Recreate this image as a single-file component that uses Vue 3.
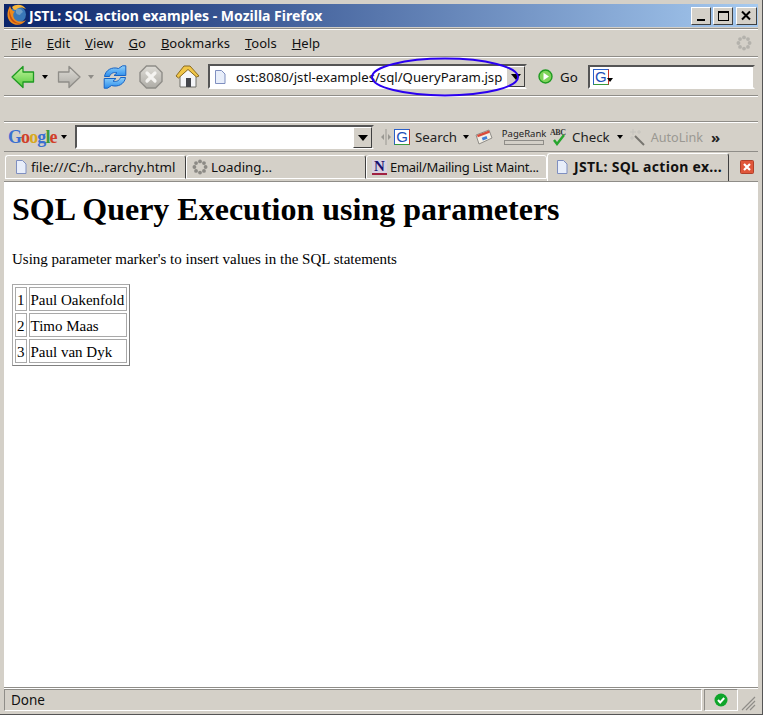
<template>
  <div class="window">
    <div class="titlebar">
      <svg class="fx" width="22" height="22" viewBox="0 0 22 22">
        <circle cx="12" cy="10.500" r="8" fill="#3a78b8" />
        <path d="M10 5c3-1 6 0 7 3-1 1-2 1-3 3-2 0-3-1-4-2z" fill="#6f9ec8" />
        <path d="M4 2 C1 7 0 14 5 18.500 C10 22.500 17 21 20 16 C16 18.500 11 18 8.500 15 C6.500 12 7 9 9 7.500 C7 7.500 5.500 6 4 2 Z" fill="#ee8a1c" />
        <path d="M6 3 C10 -0.500 17 0 20 5 C16 2.500 12 3 9.500 6 C8 6 7 5 6 3 Z" fill="#f6b73c" />
        <path d="M3.500 6 C2.500 10 3.500 15 7 18 C10 20 14 20 16 19 C11 20 5 17 3.500 6 Z" fill="#c9500f" />
      </svg>
      <span class="title-text">JSTL: SQL action examples - Mozilla Firefox</span>
      <div class="win-btns">
        <button class="win-btn"><svg width="15" height="14"><rect x="3" y="10" width="8" height="2" fill="#000" /></svg></button>
        <button class="win-btn"><svg width="15" height="14"><rect x="2.500" y="2.500" width="10" height="9" fill="none" stroke="#000" /><rect x="2" y="2" width="11" height="2" fill="#000" /></svg></button>
        <button class="win-btn close"><svg width="15" height="14"><path d="M3 2.500l8 8M11 2.500l-8 8" stroke="#000" stroke-width="2" /></svg></button>
      </div>
    </div>

    <div class="menubar">
      <span v-for="m in menus" :key="m.rest" class="menu"><u>{{ m.key }}</u>{{ m.rest }}</span>
      <svg class="throbber" width="16" height="16" viewBox="0 0 16 16">
        <g fill="#b4b2ac">
          <circle v-for="d in dots" :key="d.x + '-' + d.y" :cx="d.x" :cy="d.y" r="1.900" />
        </g>
      </svg>
    </div>

    <div class="navbar">
      <svg class="back" width="24" height="24" viewBox="0 0 24 24">
        <defs>
          <linearGradient id="gr" x1="0" y1="0" x2="0" y2="1">
            <stop offset="0" stop-color="#c6f5a0" />
            <stop offset="1" stop-color="#52c93a" />
          </linearGradient>
          <linearGradient id="bl" x1="0" y1="0" x2="0" y2="1">
            <stop offset="0" stop-color="#8fd0fa" />
            <stop offset="1" stop-color="#2a8cec" />
          </linearGradient>
          <linearGradient id="gy" x1="0" y1="0" x2="0" y2="1">
            <stop offset="0" stop-color="#dedcd6" />
            <stop offset="1" stop-color="#aeaca6" />
          </linearGradient>
        </defs>
        <path d="M1 12 L12 1.500 V7 H22.500 V17 H12 V22.500 Z" fill="url(#gr)" stroke="#1f9a22" stroke-width="1.300" stroke-linejoin="round" />
      </svg>
      <span class="arrow dark"></span>
      <svg class="forward" width="24" height="24" viewBox="0 0 24 24">
        <path d="M23 12 L12 1.500 V7 H1.500 V17 H12 V22.500 Z" fill="url(#gy)" stroke="#8f8d88" stroke-width="1.300" stroke-linejoin="round" />
      </svg>
      <span class="arrow grey"></span>
      <svg class="reload" width="24" height="24" viewBox="0 0 24 24">
        <path d="M1.500 11.500 C2.500 5 9 1.500 15.500 3.500 L19.500 .8 L22.800 .8 V10.500 H11 L14 7.800 C10.500 6.800 7.500 8.500 6.500 11.500 Z" fill="url(#bl)" stroke="#1763c4" />
        <path d="M22.500 12.500 C21.500 19 15 22.500 8.500 20.500 L4.500 23.200 L1.200 23.200 V13.500 H13 L10 16.200 C13.500 17.200 16.500 15.500 17.500 12.500 Z" fill="url(#bl)" stroke="#1763c4" />
      </svg>
      <svg class="stop" width="24" height="24" viewBox="0 0 24 24">
        <path d="M7.500 1h9l6.500 6.500v9L16.500 23h-9L1 16.500v-9z" fill="url(#gy)" stroke="#8f8d88" stroke-width="1.400" />
        <path d="M8 8l8 8M16 8l-8 8" stroke="#f4f3f0" stroke-width="3.200" stroke-linecap="round" />
      </svg>
      <svg class="home" width="25" height="25" viewBox="0 0 25 25">
        <path d="M5 12 L13 5 L21 12 V23 H5 Z" fill="#f4f5f8" stroke="#70706a" />
        <path d="M1 12 L9 2 H15 L24 12 L21.500 13 L13 5.500 L3.500 14 Z" fill="#f0c648" stroke="#8a6a20" stroke-linejoin="round" />
        <rect x="11" y="14" width="5" height="9" fill="#44464c" />
      </svg>
      <div class="urlbox">
        <svg class="page" width="14" height="16" viewBox="0 0 14 16">
          <path d="M2.500 1.500h6l3.500 3.500v9.500h-9.500z" fill="#e8eefa" stroke="#7f8fc0" />
        </svg>
        <span class="url">ost:8080/jstl-examples/sql/QueryParam.jsp</span>
        <span class="combo-btn"><i></i></span>
      </div>
      <svg class="go-icon" width="15" height="15" viewBox="0 0 15 15">
        <circle cx="7.500" cy="7.500" r="6.500" fill="#7fd45a" stroke="#1f9a22" stroke-width="1.400" />
        <path d="M5.500 3.800l5.500 3.700-5.500 3.700z" fill="#fff" />
      </svg>
      <span class="go">Go</span>
      <div class="searchbox">
        <span class="g-icon small">G</span><i class="g-caret"></i>
      </div>
    </div>

    <div class="emptybar"></div>

    <div class="googlebar">
      <span class="google"><b class="c-b">G</b><b class="c-r">o</b><b class="c-y">o</b><b class="c-b">g</b><b class="c-g">l</b><b class="c-r">e</b></span>
      <span class="arrow dark small"></span>
      <div class="gbox"><span class="combo-btn"><i></i></span></div>
      <svg class="grip" width="10" height="16" viewBox="0 0 10 16">
        <path d="M5 0v16" stroke="#9a9892" />
        <path d="M3 5v6L0 8zM7 5v6l3-3z" fill="#9a9892" />
      </svg>
      <span class="g-icon">G</span>
      <span class="tb-label search">Search</span>
      <span class="arrow dark small s2"></span>
      <svg class="cards" width="18" height="16" viewBox="0 0 18 16">
        <path d="M1 6l13-5 3 8-13 6z" fill="#f2efe6" stroke="#8f8d88" />
        <path d="M2 6l12-4.500 .8 2.200-12 4.500z" fill="#d94a3a" />
        <rect x="7" y="8" width="5" height="3" fill="#3f7fd8" transform="rotate(-20 9 9)" />
      </svg>
      <div class="pagerank"><span>PageRank</span><i></i></div>
      <svg class="abc" width="16" height="20" viewBox="0 0 16 20">
        <text x="0" y="8" font-size="8" font-family="Liberation Serif, serif" font-weight="700" fill="#333" textLength="16">ABC</text>
        <path d="M4 13l3 4 7-9" fill="none" stroke="#27a52d" stroke-width="2.400" />
      </svg>
      <span class="tb-label check">Check</span>
      <span class="arrow dark small s3"></span>
      <svg class="wand" width="16" height="17" viewBox="0 0 16 17">
        <path d="M6 7l9 9" stroke="#77756f" stroke-width="2" />
        <path d="M4 0v6M1 3h6M10 1v4M8 3h4M1 9h4M3 7v4" stroke="#c4c2bc" />
      </svg>
      <span class="tb-label autolink">AutoLink</span>
      <span class="more">»</span>
    </div>

    <div class="tabbar">
      <div class="tab t1">
        <svg width="14" height="16" viewBox="0 0 14 16"><path d="M2.500 1.500h6l3.500 3.500v9.500h-9.500z" fill="#e8eefa" stroke="#7f8fc0" /></svg>
        <span>file:///C:/h...rarchy.html</span>
      </div>
      <div class="tab t2">
        <svg width="16" height="16" viewBox="0 0 16 16"><g fill="#8c8a85"><circle v-for="d in dots" :key="d.x + '_' + d.y" :cx="d.x" :cy="d.y" r="1.900" /></g></svg>
        <span>Loading...</span>
      </div>
      <div class="tab t3">
        <span class="n-icon">N</span>
        <span class="t3-text">Email/Mailing List Maint...</span>
      </div>
      <div class="tab t4">
        <svg width="14" height="16" viewBox="0 0 14 16"><path d="M2.500 1.500h6l3.500 3.500v9.500h-9.500z" fill="#e8eefa" stroke="#7f8fc0" /></svg>
        <strong>JSTL: SQL action ex...</strong>
      </div>
      <div class="tab-close">
        <svg width="14" height="14" viewBox="0 0 14 14">
          <rect x=".5" y=".5" width="13" height="13" rx="1" fill="#e0563a" stroke="#b0402a" />
          <path d="M4 4l6 6M10 4l-6 6" stroke="#fff" stroke-width="2.200" />
        </svg>
      </div>
    </div>

    <div class="content">
      <h1>SQL Query Execution using parameters</h1>
      <p>Using parameter marker's to insert values in the SQL statements</p>
      <table>
        <tbody>
          <tr v-for="(name, i) in artists" :key="name">
            <td>{{ i + 1 }}</td>
            <td class="name">{{ name }}</td>
          </tr>
        </tbody>
      </table>
    </div>

    <div class="statusbar">
      <div class="st-main">Done</div>
      <div class="st-icon">
        <svg width="14" height="14" viewBox="0 0 14 14">
          <circle cx="7" cy="7" r="6.500" fill="#0ea52a" />
          <path d="M4 7l2.200 2.400 4-4.400" fill="none" stroke="#fff" stroke-width="2" />
        </svg>
      </div>
      <svg class="resize" width="16" height="16" viewBox="0 0 16 16">
        <path d="M15 2L2 15M15 6L6 15M15 10L10 15" stroke="#8f8d88" stroke-width="1.200" />
      </svg>
    </div>

    <svg class="annot" width="152" height="42" viewBox="0 0 152 42">
      <ellipse cx="76" cy="21" rx="73" ry="18.500" fill="none" stroke="#2a00f0" stroke-width="2" />
    </svg>
  </div>
</template>

<script setup>
const menus = [
  { key: 'F', rest: 'ile' },
  { key: 'E', rest: 'dit' },
  { key: 'V', rest: 'iew' },
  { key: 'G', rest: 'o' },
  { key: 'B', rest: 'ookmarks' },
  { key: 'T', rest: 'ools' },
  { key: 'H', rest: 'elp' }
]

const artists = ['Paul Oakenfold', 'Timo Maas', 'Paul van Dyk']

// spinner dots, 8 round the circle
const dots = [...Array(8).keys()].map(i => ({
  x: +(8 + 5.6 * Math.cos(i * Math.PI / 4)).toFixed(2),
  y: +(8 + 5.6 * Math.sin(i * Math.PI / 4)).toFixed(2)
}))
</script>

<style>
html, body { margin: 0; background: #d4d0c8; }
</style>

<style scoped>
.window { position: relative; box-sizing: border-box; width: 763px; height: 715px; padding: 4px 4px 3px 4px; background: #d4d0c8; display: flex; flex-direction: column; font-family: "Noto Sans", "Open Sans", sans-serif; font-size: 13.300px; color: #111; border: solid #555; border-width: 0 1px 1px 0; overflow: hidden; }

.titlebar { height: 23px; flex: none; display: flex; align-items: center; background: linear-gradient(to right, #0a246a, #a6caf0); color: #fff; padding-right: 1px; }
.fx { margin-left: 2px; margin-top: -2px; flex: none; }
.title-text { margin-left: 1px; font: 700 14px "Noto Sans", sans-serif; white-space: nowrap; }
.win-btns { margin-left: auto; display: flex; }
.win-btn { box-sizing: border-box; width: 20px; height: 18px; padding: 0; margin-left: 2px; background: #d4d0c8; border: 1px solid; border-color: #fff #404040 #404040 #fff; display: flex; align-items: center; justify-content: center; }
.win-btn.close { margin-left: 3px; width: 21px; }

.menubar { height: 28px; flex: none; margin-top: 2px; box-sizing: border-box; border-top: 1px solid #fff; border-bottom: 1px solid #8f8d88; box-shadow: 0 -1px 0 #8f8d88; display: flex; align-items: center; padding-left: 7px; }
.menu { margin-right: 15px; white-space: nowrap; font-size: 13px; }
.throbber { margin-left: auto; margin-right: 6px; }

.navbar { height: 39px; flex: none; box-sizing: border-box; border-top: 1px solid #fff; border-bottom: 1px solid #8f8d88; display: flex; align-items: center; padding-left: 6px; }
.arrow { display: inline-block; width: 0; height: 0; border: 3.500px solid transparent; border-bottom: 0; border-top: 4px solid #000; flex: none; }
.arrow.grey { border-top-color: #8f8d88; margin-left: 7px; }
.back { flex: none; margin-left: 1px; }
.arrow.dark { margin-left: 7px; }
.forward { margin-left: 9px; flex: none; }
.reload { margin-left: 9px; flex: none; }
.stop { margin-left: 12px; flex: none; }
.home { margin-left: 12px; flex: none; }
.urlbox { margin-left: 8px; box-sizing: border-box; width: 319px; height: 25px; background: #fff; border: 2px solid; border-color: #555 #d4d0c8 #fff #555; display: flex; align-items: center; flex: none; }
.page { margin-left: 3px; flex: none; }
.url { margin-left: 9px; white-space: nowrap; font-size: 13.200px; flex: 1; }
.combo-btn { box-sizing: border-box; width: 19px; height: 21px; background: #d4d0c8; border: 1px solid; border-color: #fff #404040 #404040 #fff; display: flex; align-items: center; justify-content: center; flex: none; }
.combo-btn i { display: block; width: 0; height: 0; border: 5px solid transparent; border-bottom: 0; border-top: 6px solid #000; }
.go-icon { margin-left: 11px; flex: none; }
.go { margin-left: 7px; }
.searchbox { margin-left: 10px; box-sizing: border-box; width: 167px; height: 24px; background: #fff; border: 2px solid; border-color: #555 #d4d0c8 #fff #555; display: flex; align-items: center; padding-left: 3px; }
.g-icon { box-sizing: border-box; width: 16px; height: 16px; flex: none; background: #fff; border: 1px solid #3a9a3a; border-top-color: #2a5fc8; border-left-color: #2a5fc8; border-right-color: #c8352a; font: 15px/14px "Liberation Sans", sans-serif; color: #1c4fb8; text-align: center; }
.g-caret { display: block; width: 0; height: 0; border: 3.500px solid transparent; border-bottom: 0; border-top: 4px solid #000; margin-top: 7px; margin-left: -2px; }

.emptybar { height: 26px; flex: none; box-sizing: border-box; border-top: 1px solid #fff; border-bottom: 1px solid #8f8d88; }

.googlebar { height: 30px; flex: none; box-sizing: border-box; border-top: 1px solid #fff; border-bottom: 1px solid #8f8d88; display: flex; align-items: center; padding-left: 4px; color: #222; }
.google { font: 700 18px "Liberation Serif", serif; letter-spacing: -0.9px; width: 50px; flex: none; }
.c-b { color: #3a6fd0; }
.c-r { color: #d0402a; }
.c-y { color: #d8a820; }
.c-g { color: #3a9a3a; }
.arrow.small { margin-left: 3px; }
.gbox { margin-left: 8px; box-sizing: border-box; width: 299px; height: 24px; background: #fff; border: 2px solid; border-color: #555 #d4d0c8 #fff #555; display: flex; justify-content: flex-end; flex: none; }
.grip { margin-left: 7px; flex: none; }
.googlebar .g-icon { margin-left: 3px; }
.tb-label { white-space: nowrap; }
.search { margin-left: 5px; }
.arrow.s2 { margin-left: 6px; }
.cards { margin-left: 6px; flex: none; }
.pagerank { margin-left: 9px; width: 44px; flex: none; display: flex; flex-direction: column; align-items: center; font-size: 9.500px; line-height: 10px; }
.pagerank span { white-space: nowrap; }
.pagerank i { display: block; box-sizing: border-box; width: 40px; height: 5px; margin-top: 1px; border: 1px solid #8f8d88; }
.abc { margin-left: 4px; flex: none; }
.check { margin-left: 6px; }
.arrow.s3 { margin-left: 7px; }
.wand { margin-left: 6px; flex: none; }
.autolink { margin-left: 6px; color: #9a9892; font-size: 12.600px; }
.more { margin-left: 8px; font-weight: 700; font-size: 15px; line-height: 14px; }

.tabbar { height: 30px; flex: none; box-sizing: border-box; display: flex; align-items: flex-end; padding: 0 0 2px 1px; border-bottom: 1px solid #8f8d88; }
.tab { box-sizing: border-box; height: 24px; display: flex; align-items: center; border: 1px solid; border-color: #fff #404040 #fff #fff; border-radius: 3px 3px 0 0; white-space: nowrap; flex: none; }
.tab span, .tab strong { margin-left: 3px; }
.t1 { width: 181px; padding-left: 8px; }
.t2 { width: 180px; padding-left: 5px; }
.t3 { width: 181px; padding-left: 5px; border-right-color: #fff; }
.t3-text { font-size: 13px; letter-spacing: -0.3px; }
.t4 { width: 182px; height: 28px; padding: 0 0 2px 7px; margin-bottom: -2px; border-bottom: 0; }
.t4 strong { font: 700 14px "Noto Sans", sans-serif; letter-spacing: 0.3px; margin-left: 5px; }
.n-icon { box-sizing: border-box; width: 15px; height: 15px; margin: 0 !important; background: #d8d0e0; border-bottom: 2px solid #a02040; font: 700 15px/13px "Liberation Serif", serif; color: #1a1070; text-align: center; flex: none; }
.tab-close { margin-left: 11px; align-self: center; margin-top: 3px; display: flex; }

.content { flex: 1; min-height: 0; background: #fff; box-sizing: border-box; padding: 8px; font: 15px "Liberation Serif", "Times New Roman", serif; color: #000; border-bottom: 1px solid #8f8d88; }
h1 { margin: 1px 0 22px; font-size: 32px; line-height: 37px; font-weight: 700; }
p { margin: 0 0 16px; line-height: 18px; }
table { border: 1px solid #a9a9a9; border-bottom-color: #808080; border-right-color: #808080; border-spacing: 2px; }
td { border: 1px solid #a9a9a9; padding: 2px 1px 0; line-height: 20px; }
td.name { padding-right: 2px; }

.statusbar { height: 23px; flex: none; display: flex; align-items: stretch; border-top: 1px solid #fff; box-sizing: border-box; }
.st-main { flex: 1; box-sizing: border-box; border: 1px solid; border-color: #8f8d88 #fff #fff #8f8d88; padding-left: 6px; line-height: 20px; font-size: 13.500px; }
.st-icon { width: 34px; margin-left: 2px; box-sizing: border-box; border: 1px solid; border-color: #8f8d88 #fff #fff #8f8d88; display: flex; align-items: center; justify-content: center; }
.resize { width: 20px; align-self: flex-end; }

.annot { position: absolute; left: 369px; top: 56px; pointer-events: none; }
</style>
